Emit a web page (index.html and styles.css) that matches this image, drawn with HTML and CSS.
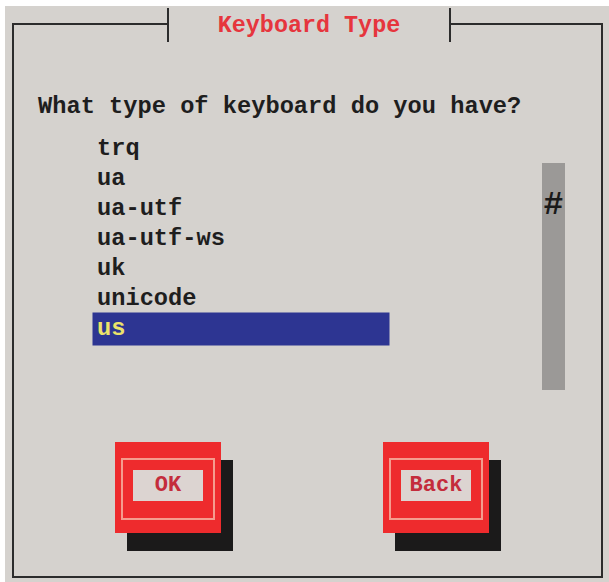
FILE: index.html
```html
<!DOCTYPE html>
<html>
<head>
<meta charset="utf-8">
<link rel="stylesheet" href="styles.css">
</head>
<body>
<div class="screen">
  <div class="frame">
    <div class="title">Keyboard Type</div>
    <p class="question">What type of keyboard do you have?</p>
    <div class="listrow">
      <ul class="list">
        <li>trq</li>
        <li>ua</li>
        <li>ua-utf</li>
        <li>ua-utf-ws</li>
        <li>uk</li>
        <li>unicode</li>
        <li class="selected">us</li>
      </ul>
      <div class="scrollbar"><span class="thumb">#</span></div>
    </div>
    <div class="buttons">
      <div class="btn"><div class="btn-frame"><span class="btn-label">OK</span></div></div>
      <div class="btn"><div class="btn-frame"><span class="btn-label">Back</span></div></div>
    </div>
  </div>
</div>
</body>
</html>
```
FILE: styles.css
```css
html, body {
  margin: 0;
  padding: 0;
  background: #ffffff;
}
body {
  width: 609px;
  height: 582px;
  overflow: hidden;
  font-family: "Liberation Mono", "DejaVu Sans Mono", monospace;
  font-weight: bold;
  font-size: 23.7px;
  color: #1e1e1e;
}
.screen {
  margin: 6px 0 0 5px;
  width: 604px;
  height: 576px;
  box-sizing: border-box;
  padding: 17px 6px 4px 7px;
  background: #d5d2ce;
}
.frame {
  position: relative;
  height: 100%;
  box-sizing: border-box;
  border: 2px solid #2c2c2c;
  padding: 67px 0 0 24px;
}
.title {
  position: absolute;
  top: -17px;
  left: 153px;
  width: 284px;
  height: 34px;
  box-sizing: border-box;
  border-left: 2px solid #2c2c2c;
  border-right: 2px solid #2c2c2c;
  background: #d5d2ce;
  color: #e6353d;
  text-align: center;
  line-height: 30px;
  padding-top: 3px;
  font-size: 23.4px;
}
.question {
  margin: 0;
  line-height: 30px;
  white-space: nowrap;
}
.listrow {
  display: flex;
  align-items: flex-start;
  margin-top: 12px;
}
.list {
  list-style: none;
  margin: 0 0 0 56px;
  padding: 0;
  width: 294px;
}
.list li {
  line-height: 30px;
  height: 30px;
  padding-left: 3px;
}
.list li.selected {
  background: #2d3592;
  box-shadow: 0 0 0 1.5px #2d3592;
  color: #ece36a;
}
.scrollbar {
  margin: 29px 36px 0 auto;
  width: 23px;
  height: 227px;
  background: #9b9997;
  text-align: center;
  box-sizing: border-box;
  padding-top: 26px;
  line-height: 34px;
}
.thumb {
  color: #1a1a1a;
  font-size: 33px;
}
.buttons {
  display: flex;
  gap: 162px;
  margin-top: 52px;
  padding-left: 77px;
}
.btn {
  width: 106px;
  height: 91px;
  box-sizing: border-box;
  padding: 16px 6px 13px 6px;
  background: #ee2b2d;
  box-shadow: 12px 18px 0 #1b1a1a;
}
.btn-frame {
  height: 100%;
  box-sizing: border-box;
  border: 2px solid #f59c8e;
  padding: 10px;
}
.btn-label {
  display: block;
  height: 31px;
  background: #dcd4d1;
  color: #c42c3c;
  text-align: center;
  line-height: 31px;
  font-size: 22px;
}
```
